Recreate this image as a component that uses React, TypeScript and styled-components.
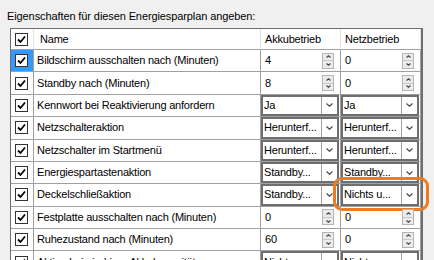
import React from 'react';
import styled, { createGlobalStyle } from 'styled-components';

type CellValue = { kind: 'spin' | 'combo'; value: string };

interface PlanRow {
  name: string;
  akku: CellValue;
  netz: CellValue;
  selected?: boolean;
  marked?: boolean;
}

const spin = (value: string): CellValue => ({ kind: 'spin', value });
const combo = (value: string): CellValue => ({ kind: 'combo', value });

const rows: PlanRow[] = [
  { name: 'Bildschirm ausschalten nach (Minuten)', akku: spin('4'), netz: spin('0'), selected: true },
  { name: 'Standby nach (Minuten)', akku: spin('8'), netz: spin('0') },
  { name: 'Kennwort bei Reaktivierung anfordern', akku: combo('Ja'), netz: combo('Ja') },
  { name: 'Netzschalteraktion', akku: combo('Herunterf...'), netz: combo('Herunterf...') },
  { name: 'Netzschalter im Startmenü', akku: combo('Herunterf...'), netz: combo('Herunterf...') },
  { name: 'Energiespartastenaktion', akku: combo('Standby...'), netz: combo('Standby...') },
  { name: 'Deckelschließaktion', akku: combo('Standby...'), netz: combo('Nichts u...'), marked: true },
  { name: 'Festplatte ausschalten nach (Minuten)', akku: spin('0'), netz: spin('0') },
  { name: 'Ruhezustand nach (Minuten)', akku: spin('60'), netz: spin('0') },
  { name: 'Aktion bei niedriger Akkukapazität', akku: combo('Nichts u...'), netz: combo('Nichts u...') },
];

const GlobalStyle = createGlobalStyle`
  html, body {
    margin: 0;
    padding: 0;
    background: #f0f0f0;
    overflow: hidden;
  }
  body {
    font-family: "Liberation Sans", Arial, sans-serif;
    font-size: 11px;
    letter-spacing: -0.2px;
    color: #000;
  }
`;

const Window = styled.div`
  width: 434px;
  height: 260px;
  overflow: hidden;
  background: #f0f0f0;
`;

const Title = styled.div`
  margin: 10px 0 0 7px;
  line-height: 13px;
  height: 13px;
  letter-spacing: -0.1px;
`;

const Grid = styled.div`
  margin: 5px 0 0 10px;
  width: 413px;
  border-left: 1px solid #6e6e6e;
  border-top: 1px solid #6e6e6e;
  border-right: 2px solid #6e6e6e;
  background: #fff;
  box-sizing: border-box;
`;

const Row = styled.div<{ $head?: boolean }>`
  display: grid;
  grid-template-columns: 23px 227px 80px 80px;
  height: ${(p) => (p.$head ? '21px' : '22.375px')};
`;

const Cell = styled.div<{ $head?: boolean; $indent?: number }>`
  position: relative;
  box-sizing: border-box;
  display: flex;
  align-items: center;
  min-width: 0;
  padding-left: ${(p) => p.$indent ?? 3}px;
  border-right: 1px solid ${(p) => (p.$head ? '#e3e3e3' : '#a0a0a0')};
  border-bottom: 1px solid #a0a0a0;
  white-space: nowrap;
  line-height: 13px;
`;

const CheckCell = styled(Cell)<{ $selected?: boolean }>`
  justify-content: center;
  padding-left: 0;
  padding-right: 1px;
  background: ${(p) => (p.$selected ? '#3399ff' : '#fff')};
`;

const CheckBox = styled.span`
  width: 13px;
  height: 13px;
  box-sizing: border-box;
  border: 1px solid #333;
  background: #fff;
  display: flex;
  align-items: center;
  justify-content: center;
`;

const SpinText = styled.span`
  flex: 1;
`;

const SpinBox = styled.span`
  width: 12px;
  height: 16px;
  margin-right: 6px;
  box-sizing: border-box;
  border: 1px solid #b4b4b4;
  background: #ececec;
  display: flex;
  flex-direction: column;
`;

const SpinHalf = styled.span<{ $top?: boolean }>`
  flex: 1;
  display: flex;
  align-items: center;
  justify-content: center;
  border-bottom: ${(p) => (p.$top ? '1px solid #c8c8c8' : 'none')};
`;

const ComboBox = styled.div`
  position: absolute;
  inset: 0 1px 0 0;
  box-sizing: border-box;
  border: 2px solid #6e6e6e;
  display: flex;
  align-items: center;
  background: #fff;
`;

const ComboText = styled.span`
  flex: 1;
  padding-left: 1px;
  overflow: hidden;
`;

const ComboButton = styled.span`
  width: 15px;
  align-self: stretch;
  border-left: 1px solid #a0a0a0;
  display: flex;
  align-items: center;
  justify-content: center;
`;

const Marker = styled.div`
  position: absolute;
  left: -8px;
  right: -9px;
  top: -7px;
  bottom: -5px;
  border: 3px solid #f07a1e;
  border-radius: 9px;
  pointer-events: none;
`;

function Check() {
  return (
    <CheckBox>
      <svg width="9" height="9" viewBox="0 0 9 9">
        <polyline points="1,4.5 3.5,7 8,1.5" fill="none" stroke="#000" strokeWidth="1.8" />
      </svg>
    </CheckBox>
  );
}

function Chevron({ up, size = 7 }: { up?: boolean; size?: number }) {
  const h = Math.round(size * 0.6);
  return (
    <svg width={size} height={h} viewBox={`0 0 ${size} ${h}`}>
      <polyline
        points={up ? `0.5,${h - 0.5} ${size / 2},0.8 ${size - 0.5},${h - 0.5}` : `0.5,0.5 ${size / 2},${h - 0.8} ${size - 0.5},0.5`}
        fill="none"
        stroke="#505050"
        strokeWidth="1.3"
      />
    </svg>
  );
}

function ValueCell({ cell, marked }: { cell: CellValue; marked?: boolean }) {
  if (cell.kind === 'spin') {
    return (
      <Cell $indent={4}>
        <SpinText>{cell.value}</SpinText>
        <SpinBox>
          <SpinHalf $top>
            <Chevron up size={5} />
          </SpinHalf>
          <SpinHalf>
            <Chevron size={5} />
          </SpinHalf>
        </SpinBox>
      </Cell>
    );
  }
  return (
    <Cell>
      <ComboBox>
        <ComboText>{cell.value}</ComboText>
        <ComboButton>
          <Chevron />
        </ComboButton>
      </ComboBox>
      {marked && <Marker />}
    </Cell>
  );
}

export default function App() {
  return (
    <Window>
      <GlobalStyle />
      <Title>Eigenschaften für diesen Energiesparplan angeben:</Title>
      <Grid>
        <Row $head>
          <CheckCell $head>
            <Check />
          </CheckCell>
          <Cell $head $indent={6}>Name</Cell>
          <Cell $head $indent={4}>Akkubetrieb</Cell>
          <Cell $head $indent={4}>Netzbetrieb</Cell>
        </Row>
        {rows.map((r) => (
          <Row key={r.name}>
            <CheckCell $selected={r.selected}>
              <Check />
            </CheckCell>
            <Cell>{r.name}</Cell>
            <ValueCell cell={r.akku} />
            <ValueCell cell={r.netz} marked={r.marked} />
          </Row>
        ))}
      </Grid>
    </Window>
  );
}
